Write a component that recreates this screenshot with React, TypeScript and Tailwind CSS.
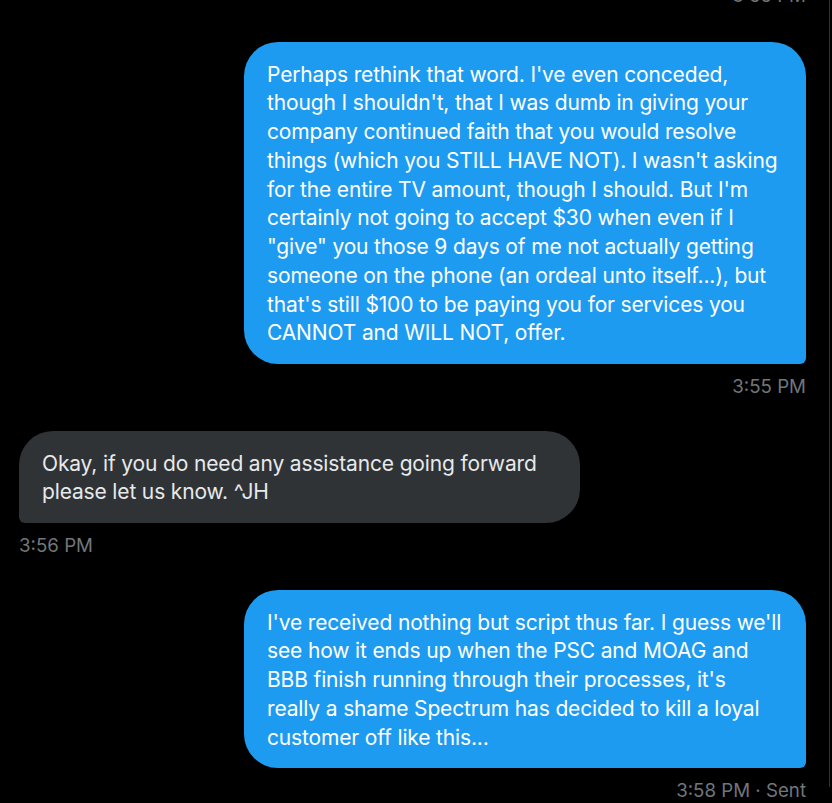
const font = { fontFamily: "Inter, 'Noto Sans', sans-serif" };

function Sent({ lines, time }: { lines: string[]; time: string }) {
  return (
    <div className="flex flex-col items-end pb-[33px]">
      <div className="w-[562px] rounded-[34px] rounded-br-[6px] bg-[#1d9bf0] px-[23px] pb-[16px] pt-[18.5px] text-[21px] leading-[28.75px] tracking-[-0.15px] text-white">
        {lines.map((l, i) => (
          <div key={i} className="whitespace-nowrap">
            {l}
          </div>
        ))}
      </div>
      <div className="pt-[11px] text-[18.7px] leading-[23px] text-[#71767b]">{time}</div>
    </div>
  );
}

function Received({ lines, time }: { lines: string[]; time: string }) {
  return (
    <div className="flex flex-col items-start pb-[33px]">
      <div className="w-[561px] rounded-[34px] rounded-bl-[6px] bg-[#2f3336] px-[23px] pb-[16px] pt-[18.5px] text-[21px] leading-[28.75px] tracking-[-0.15px] text-[#e7e9ea]">
        {lines.map((l, i) => (
          <div key={i} className="whitespace-nowrap">
            {l}
          </div>
        ))}
      </div>
      <div className="pt-[11px] text-[18.7px] leading-[23px] text-[#71767b]">{time}</div>
    </div>
  );
}

export default function App() {
  return (
    <div className="h-[803px] w-[832px] overflow-hidden bg-black" style={font}>
      <div className="h-full w-[830px] border-r border-[#2f3336] pl-[19px] pr-[23px]">
        {/* previous timestamp, cut off at the top */}
        <div className="-mt-[16px] flex justify-end pb-[35px]">
          <div className="text-[18.7px] leading-[23px] text-[#71767b]">3:55 PM</div>
        </div>

        <Sent
          time="3:55 PM"
          lines={[
            "Perhaps rethink that word. I've even conceded,",
            "though I shouldn't, that I was dumb in giving your",
            "company continued faith that you would resolve",
            "things (which you STILL HAVE NOT). I wasn't asking",
            "for the entire TV amount, though I should. But I'm",
            "certainly not going to accept $30 when even if I",
            "\"give\" you those 9 days of me not actually getting",
            "someone on the phone (an ordeal unto itself...), but",
            "that's still $100 to be paying you for services you",
            "CANNOT and WILL NOT, offer.",
          ]}
        />

        <Received
          time="3:56 PM"
          lines={["Okay, if you do need any assistance going forward", "please let us know. ^JH"]}
        />

        <Sent
          time="3:58 PM · Sent"
          lines={[
            "I've received nothing but script thus far. I guess we'll",
            "see how it ends up when the PSC and MOAG and",
            "BBB finish running through their processes, it's",
            "really a shame Spectrum has decided to kill a loyal",
            "customer off like this...",
          ]}
        />
      </div>
    </div>
  );
}
